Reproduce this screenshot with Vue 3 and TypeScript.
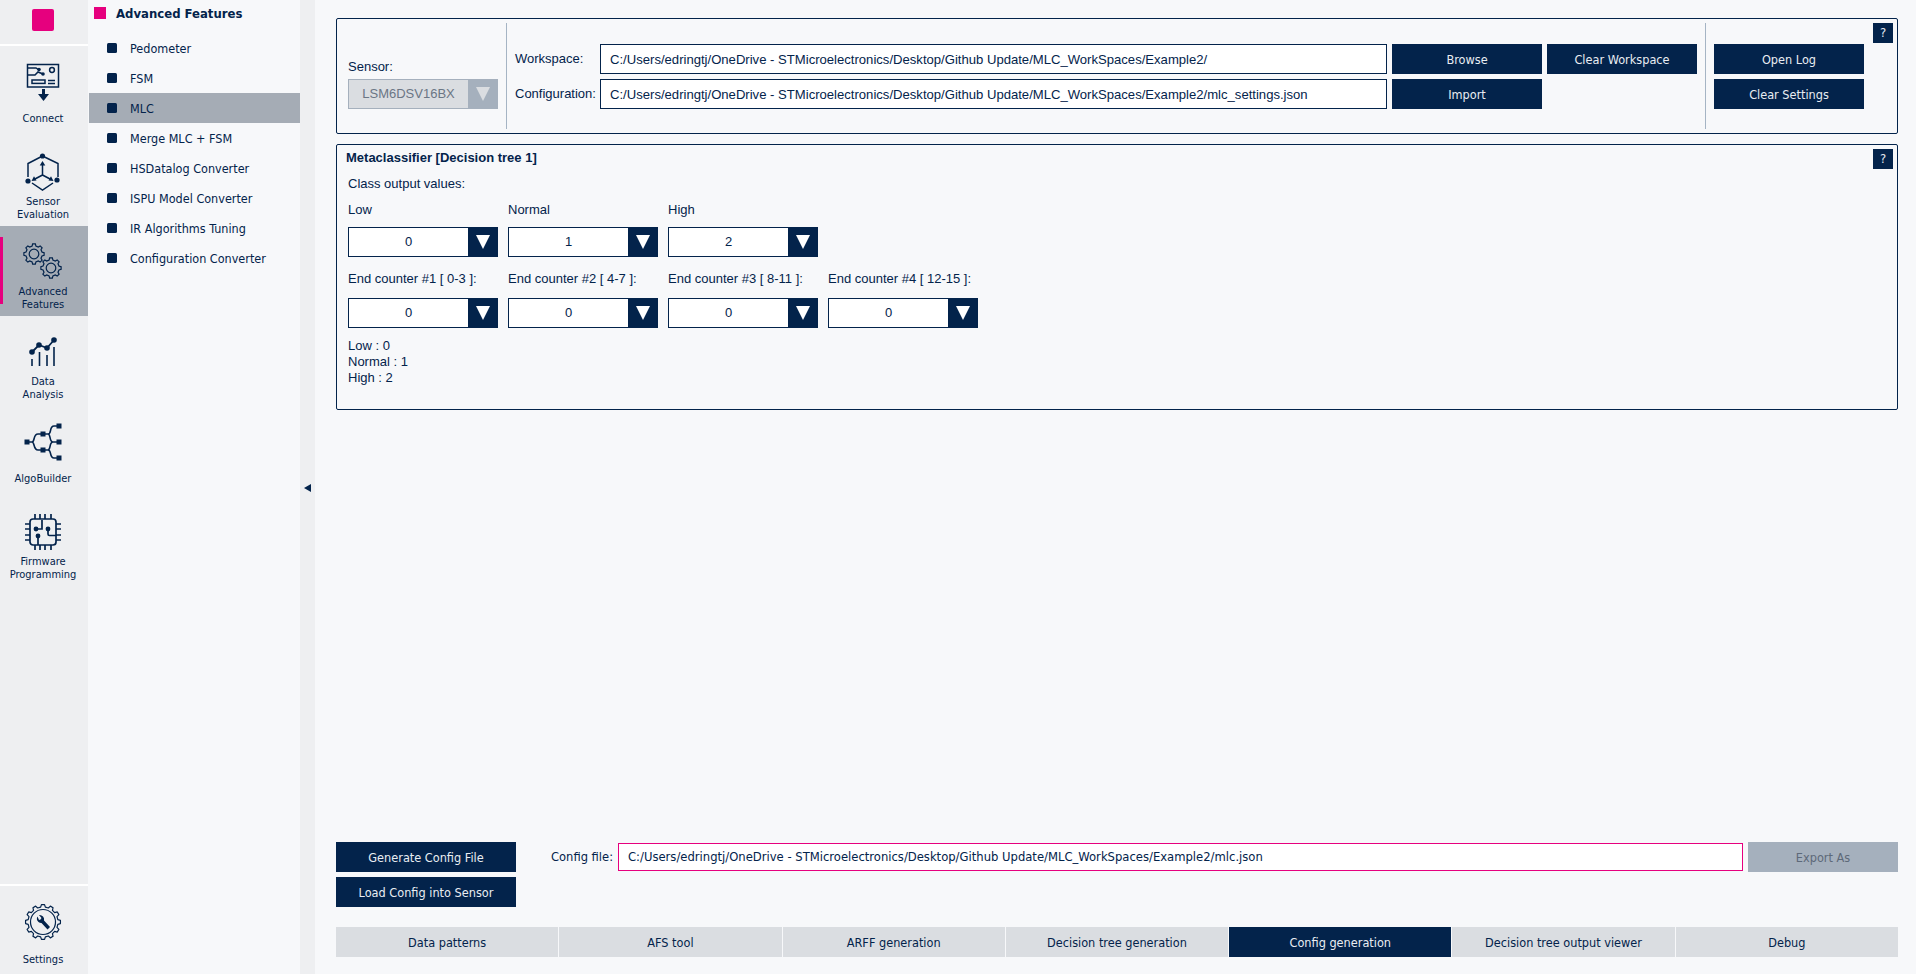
<script setup lang="ts">
function gear(cx: number, cy: number, r: number, R: number, teeth: number): string {
  const step = (Math.PI * 2) / teeth;
  let d = "";
  for (let i = 0; i < teeth; i++) {
    const a = i * step;
    const pts: [number, number][] = [
      [r, a - step * 0.3],
      [R, a - step * 0.17],
      [R, a + step * 0.17],
      [r, a + step * 0.3],
    ];
    for (const [rad, ang] of pts) {
      const x = (cx + rad * Math.cos(ang)).toFixed(2);
      const y = (cy + rad * Math.sin(ang)).toFixed(2);
      d += (d ? "L" : "M") + x + " " + y;
    }
  }
  return d + "Z";
}

const gearA = gear(12, 18, 8.2, 10.2, 8);
const gearB = gear(29, 32, 8.2, 10.2, 8);
const gearSettings = gear(21, 26, 15, 17.5, 12);

const railItems = [
  { key: "connect", lines: ["Connect"] },
  { key: "sensor", lines: ["Sensor", "Evaluation"] },
  { key: "advanced", lines: ["Advanced", "Features"] },
  { key: "data", lines: ["Data", "Analysis"] },
  { key: "algo", lines: ["AlgoBuilder"] },
  { key: "firmware", lines: ["Firmware", "Programming"] },
];

const navItems = [
  "Pedometer",
  "FSM",
  "MLC",
  "Merge MLC + FSM",
  "HSDatalog Converter",
  "ISPU Model Converter",
  "IR Algorithms Tuning",
  "Configuration Converter",
];

const classCombos = [
  { label: "Low", value: "0" },
  { label: "Normal", value: "1" },
  { label: "High", value: "2" },
];

const counterCombos = [
  { label: "End counter #1 [ 0-3 ]:", value: "0" },
  { label: "End counter #2 [ 4-7 ]:", value: "0" },
  { label: "End counter #3 [ 8-11 ]:", value: "0" },
  { label: "End counter #4 [ 12-15 ]:", value: "0" },
];

const tabs = [
  "Data patterns",
  "AFS tool",
  "ARFF generation",
  "Decision tree generation",
  "Config generation",
  "Decision tree output viewer",
  "Debug",
];

const basePath = "C:/Users/edringtj/OneDrive - STMicroelectronics/Desktop/Github Update/MLC_WorkSpaces/Example2/";
</script>

<template>
  <div class="app">
    <aside class="rail">
      <div class="logo"><span class="logo-mark"></span></div>
      <div
        v-for="item in railItems"
        :key="item.key"
        class="rail-item"
        :class="{ active: item.key === 'advanced' }"
      >
        <svg class="rail-icon" viewBox="0 0 44 50" fill="none" stroke="#03234b" stroke-width="1.5">
          <g v-if="item.key === 'connect'">
            <rect x="5.5" y="8.5" width="31" height="22.5" />
            <path d="M6 12h8l3 2M6 19h7l3-3 5 2" />
            <circle cx="17" cy="13.5" r="1.8" fill="#03234b" stroke="none" />
            <circle cx="21" cy="18" r="1.8" fill="#03234b" stroke="none" />
            <circle cx="30" cy="14" r="2.4" />
            <rect x="10" y="24" width="13" height="3.4" />
            <path d="M26 24.5h7M26 27.5h7" />
            <path d="M21.5 33v6" stroke-width="3" />
            <path d="M16 38h11l-5.5 7z" fill="#03234b" stroke="none" />
          </g>
          <g v-else-if="item.key === 'sensor'">
            <path d="M20.5 10L6 17.5V31M20.5 10L36 17.5V31M10 37l10.5 7L31 37" />
            <path d="M20.5 29V18M20.5 29L12 33.5M20.5 29L29 33.5" />
            <path d="M20.5 15l-2.8 4.5h5.6zM9.5 35l5-.5-2.5-4.2zM31.5 35l-5-.5 2.5-4.2z" fill="#03234b" stroke="none" />
            <circle cx="20.5" cy="10" r="2.6" fill="#03234b" stroke="none" />
            <circle cx="6" cy="35" r="2.6" fill="#03234b" stroke="none" />
            <circle cx="35" cy="34" r="2.6" fill="#03234b" stroke="none" />
          </g>
          <g v-else-if="item.key === 'advanced'" stroke-width="1.2">
            <path :d="gearA" />
            <circle cx="12" cy="18" r="4.8" />
            <path :d="gearB" />
            <circle cx="29" cy="32" r="4.8" />
          </g>
          <g v-else-if="item.key === 'data'">
            <path d="M10 26L17 19L25 22L32 14" stroke-width="1.8" />
            <circle cx="10" cy="26" r="2.8" fill="#03234b" stroke="none" />
            <circle cx="17" cy="19" r="2.8" fill="#03234b" stroke="none" />
            <circle cx="25" cy="22" r="2.8" fill="#03234b" stroke="none" />
            <circle cx="32" cy="14" r="2.8" fill="#03234b" stroke="none" />
            <path d="M10 33v7M17.5 26v14M25 29v11M32 21v19" stroke-width="1.6" />
          </g>
          <g v-else-if="item.key === 'algo'" stroke-width="1.6">
            <path d="M5 26h5M10 26c3 0 1-8 6-8h5M10 26c3 0 1 8 6 8h5" />
            <path d="M21 18h5c4 0 1-8 6-8h5M21 34h5c4 0 1 8 6 8h5M26 18c3 0 1 8 5 8h6M26 34c3 0 1-8 5-8" />
            <g fill="#03234b" stroke="none">
              <rect x="2.5" y="23.5" width="5" height="5" />
              <rect x="18.5" y="15.5" width="5" height="5" />
              <rect x="18.5" y="31.5" width="5" height="5" />
              <rect x="34.5" y="7.5" width="5" height="5" />
              <rect x="34.5" y="23.5" width="5" height="5" />
              <rect x="34.5" y="39.5" width="5" height="5" />
            </g>
          </g>
          <g v-else-if="item.key === 'firmware'" stroke-width="1.7">
            <rect x="8" y="13" width="26" height="26" rx="3" />
            <path d="M13 8v5M18 8v5M23 8v5M29 8v5M13 39v5M18 39v5M23 39v5M29 39v5" />
            <path d="M3 18h5M3 23h5M3 29h5M3 34h5M34 18h5M34 23h5M34 29h5M34 34h5" />
            <path d="M14 23h6v-9M26 23v5q0 1.5 1.5 1.5H34M16 30v9" />
            <circle cx="14" cy="23" r="2.4" fill="#03234b" stroke="none" />
            <circle cx="26" cy="23" r="2.4" fill="#03234b" stroke="none" />
            <circle cx="16" cy="30" r="2.4" fill="#03234b" stroke="none" />
          </g>
        </svg>
        <div class="rail-label">
          <span v-for="line in item.lines" :key="line">{{ line }}</span>
        </div>
      </div>
      <div class="rail-item settings">
        <svg class="rail-icon" viewBox="0 0 44 50" fill="none" stroke="#03234b" stroke-width="1.2">
          <path :d="gearSettings" stroke-linejoin="round" />
          <circle cx="21" cy="26" r="12.5" />
          <path
            d="M15.5 20.5a4.5 4.5 0 0 0 1 5.5 4.5 4.5 0 0 0 3 1l6 6.5 2.5-2.5-6-6.5a4.5 4.5 0 0 0-1-4 4.5 4.5 0 0 0-4-1.5l2.5 3-1 1.5-1.5.5z"
            fill="#03234b"
            stroke="none"
          />
        </svg>
        <div class="rail-label"><span>Settings</span></div>
      </div>
    </aside>

    <nav class="side">
      <div class="side-title"><span class="side-mark"></span>Advanced Features</div>
      <div v-for="item in navItems" :key="item" class="side-item" :class="{ active: item === 'MLC' }">
        <span class="bullet"></span>{{ item }}
      </div>
    </nav>

    <div class="collapse"><span class="collapse-arrow"></span></div>

    <main class="main">
      <section class="panel top-panel">
        <div class="sensor-box">
          <div class="label">Sensor:</div>
          <div class="combo disabled">
            <div class="combo-value">LSM6DSV16BX</div>
            <div class="combo-btn"><span class="tri"></span></div>
          </div>
        </div>
        <div class="workspace-box">
          <div class="label">Workspace:</div>
          <div class="path-input">{{ basePath }}</div>
          <button class="btn">Browse</button>
          <button class="btn">Clear Workspace</button>
          <div class="label">Configuration:</div>
          <div class="path-input">{{ basePath }}mlc_settings.json</div>
          <button class="btn">Import</button>
        </div>
        <div class="log-box">
          <button class="btn">Open Log</button>
          <button class="btn">Clear Settings</button>
        </div>
        <button class="help">?</button>
      </section>

      <section class="panel meta-panel">
        <div class="meta-title">Metaclassifier [Decision tree 1]</div>
        <div class="label class-label">Class output values:</div>
        <div class="combo-row first">
          <div v-for="c in classCombos" :key="c.label" class="combo-group">
            <div class="label">{{ c.label }}</div>
            <div class="combo">
              <div class="combo-value">{{ c.value }}</div>
              <div class="combo-btn"><span class="tri"></span></div>
            </div>
          </div>
        </div>
        <div class="combo-row">
          <div v-for="c in counterCombos" :key="c.label" class="combo-group">
            <div class="label">{{ c.label }}</div>
            <div class="combo">
              <div class="combo-value">{{ c.value }}</div>
              <div class="combo-btn"><span class="tri"></span></div>
            </div>
          </div>
        </div>
        <div class="summary">
          <div>Low : 0</div>
          <div>Normal : 1</div>
          <div>High : 2</div>
        </div>
        <button class="help">?</button>
      </section>

      <div class="spacer"></div>

      <section class="bottom">
        <div class="gen-btns">
          <button class="btn">Generate Config File</button>
          <button class="btn">Load Config into Sensor</button>
        </div>
        <div class="config-label">Config file:</div>
        <div class="config-input">{{ basePath }}mlc.json</div>
        <button class="btn export" disabled>Export As</button>
      </section>

      <div class="tabs">
        <div v-for="t in tabs" :key="t" class="tab" :class="{ active: t === 'Config generation' }">{{ t }}</div>
      </div>
    </main>
  </div>
</template>

<style>
html, body { margin: 0; background: #f7f8fa; }
</style>

<style scoped>
.app {
  display: flex; width: 1916px; height: 974px; overflow: hidden;
  background: #f7f8fa; color: #03234b;
  font-family: "DejaVu Sans Condensed", "DejaVu Sans", sans-serif;
}

.rail { width: 88px; flex: none; background: #eeeff1; display: flex; flex-direction: column; }
.logo { height: 35px; flex: none; border-bottom: 2px solid #fff; display: flex; justify-content: center; padding-top: 9px; }
.logo-mark { width: 22px; height: 22px; border-radius: 2px; background: #e6007e; margin-right: 2px; }
.rail-item { position: relative; height: 90px; flex: none; display: flex; flex-direction: column; align-items: center; padding-top: 10px; box-sizing: border-box; }
.rail-item.active { background: #a5acb5; }
.rail-item.active::before { content: ""; position: absolute; left: 0; top: 11px; width: 3px; height: 67px; background: #e6007e; }
.rail-icon { width: 44px; height: 50px; flex: none; }
.rail-label { height: 26px; margin: -1px 2px 0 0; display: flex; flex-direction: column; justify-content: center; align-items: center; font-size: 11px; line-height: 13px; }
.rail-item.settings { margin-top: auto; height: 88px; border-top: 2px solid #fff; box-sizing: content-box; padding-top: 0; }
.rail-item.settings .rail-icon { margin-top: 10px; }
.rail-item.settings .rail-label { margin-top: 0; }

.side { width: 212px; flex: none; background: #f7f8fa; }
.side-title { height: 26px; display: flex; align-items: center; font-weight: 700; font-size: 13px; padding-left: 6px; margin-bottom: 7px; }
.side-mark { width: 12px; height: 12px; background: #e6007e; margin-right: 10px; }
.side-item { height: 30px; display: flex; align-items: center; font-size: 12.5px; margin-left: 1px; padding-left: 18px; }
.side-item.active { background: #a5acb5; }
.bullet { width: 10px; height: 10px; border-radius: 1.5px; background: #03234b; margin-right: 13px; }

.collapse { width: 15px; flex: none; background: #eeeff1; display: flex; align-items: center; padding: 2px 0 0 4px; box-sizing: border-box; }
.collapse-arrow { width: 0; height: 0; border-style: solid; border-width: 4px 7px 4px 0; border-color: transparent #03234b transparent transparent; }

.main { flex: 1; min-width: 0; display: flex; flex-direction: column; padding: 18px 18px 17px 21px; }
.panel { position: relative; box-sizing: border-box; border: 1px solid #03234b; border-radius: 2px; flex: none; }
.top-panel { height: 116px; display: flex; padding: 4px 0; }
.meta-panel { height: 266px; margin-top: 10px; padding: 5px 11px; }
.help {
  position: absolute; top: 4px; right: 4px; width: 20px; height: 20px; padding: 0;
  border: none; background: #03234b; color: #e3e8ef; font: 400 13px/20px "DejaVu Sans Condensed", sans-serif;
}

.label { font: 13px/16px "Liberation Sans", Arial, sans-serif; white-space: nowrap; }
.sensor-box { width: 158px; flex: none; padding: 36px 0 0 11px; display: flex; flex-direction: column; gap: 4px; border-right: 1px solid #a5b4c4; }
.workspace-box {
  flex: 1; min-width: 0; padding: 21px 8px 0 8px; border-right: 1px solid #a5b4c4;
  display: grid; grid-template-columns: 80px 1fr 150px 150px; grid-template-rows: 30px 30px; gap: 5px; align-items: center;
}
.log-box { width: 150px; flex: none; padding: 21px 33px 0 8px; display: flex; flex-direction: column; gap: 5px; }

.path-input {
  height: 30px; box-sizing: border-box; border: 1px solid #03234b; background: #fff;
  padding-left: 9px; font: 13.1px/29px "Liberation Sans", Arial, sans-serif; white-space: nowrap; overflow: hidden;
}
.btn {
  height: 30px; padding: 0; border: none; background: #03234b; color: #e9edf2;
  font: 12.6px "DejaVu Sans Condensed", sans-serif; display: block; width: 100%;
}
.btn.export { background: #a5b0bd; color: #5d6979; width: 150px; flex: none; }

.combo { width: 150px; height: 30px; box-sizing: border-box; display: flex; border: 1px solid #03234b; background: #fff; }
.combo-value { flex: 1; text-align: center; font: 13px/28px "Liberation Sans", Arial, sans-serif; }
.combo-btn { width: 30px; margin: -1px -1px -1px 0; background: #03234b; display: flex; align-items: center; justify-content: center; }
.tri { width: 0; height: 0; border-style: solid; border-width: 14px 7.5px 0 7.5px; border-color: #fff transparent transparent transparent; }
.combo.disabled { background: #dadde1; border-color: #a5b0bd; }
.combo.disabled .combo-value { color: #6b7685; }
.combo.disabled .combo-btn { background: #a5b0bd; }
.combo.disabled .tri { border-top-color: #dadde1; }

.meta-title { margin-left: -2px; font: 700 13px/16px "Liberation Sans", Arial, sans-serif; }
.class-label { margin-top: 10px; }
.combo-row { display: flex; gap: 10px; margin-top: 14px; }
.combo-row.first { margin-top: 10px; }
.combo-group { width: 150px; display: flex; flex-direction: column; gap: 11px; }
.first .combo-group { gap: 9px; }
.summary { margin-top: 10px; font: 13px/16px "Liberation Sans", Arial, sans-serif; }

.spacer { flex: 1; }

.bottom { display: flex; align-items: flex-start; flex: none; height: 65px; }
.gen-btns { width: 180px; flex: none; display: flex; flex-direction: column; gap: 5px; }
.config-label { margin-left: 35px; width: 67px; flex: none; font-size: 12.8px; line-height: 30px; }
.config-input {
  flex: 1; min-width: 0; height: 28px; margin-top: 1px; margin-right: 5px; box-sizing: border-box;
  border: 1px solid #e6007e; background: #fff; padding-left: 9px;
  font-size: 12.9px; line-height: 26px; white-space: nowrap; overflow: hidden;
}

.tabs { display: flex; gap: 1px; margin-top: 20px; flex: none; }
.tab { flex: 1; height: 30px; background: #dadde1; text-align: center; font-size: 12.6px; line-height: 31px; }
.tab.active { background: #03234b; color: #e9edf2; }
</style>
